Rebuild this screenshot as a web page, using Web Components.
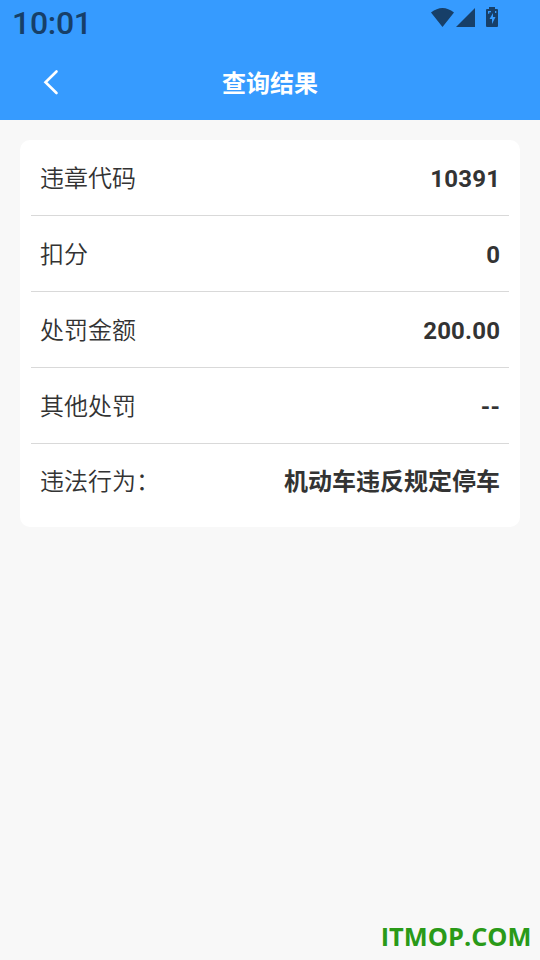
<!DOCTYPE html>
<html lang="zh-CN"><head><meta charset="utf-8"><title>查询结果</title>
<style>html,body{margin:0;height:100%;background:#f8f8f8}body{font-family:Roboto,"Noto Sans CJK SC",sans-serif;color:#333;overflow:hidden}</style></head><body>
<result-page></result-page>
<script>
const define=(name,html)=>customElements.define(name,class extends HTMLElement{
  constructor(){super();this.attachShadow({mode:'open'}).innerHTML=html}
});
define('status-bar',`<style>
:host{display:flex;height:45px;justify-content:space-between;color:#173f68;box-sizing:border-box;padding:0 41px 0 12px}
.time{font:500 32px/46px Roboto,sans-serif;letter-spacing:-.3px}
svg{margin-top:6px;flex:none}
</style><span class="time">10:01</span>
<svg width="69" height="24" viewBox="430 6 69 24"><path fill="currentColor" d="M431 12.500Q442.500 3.500 454 12.500L442.500 27ZM475 8V27H456ZM489 7h6v2h2q1 0 1 1v16q0 1-1 1h-10q-1 0-1-1V10q0-1 1-1h2Z"/><path fill="#369bff" d="M493 13l-3.500 6h2.500v5l3.500-7h-2.500ZM488 11h3v1.300h-1.700v1.500H488ZM495 11h1.300v2h-1.300Z"/></svg>`);
define('nav-bar',`<style>
:host{display:grid;grid-template-columns:80px 1fr 80px;height:75px;align-items:center;color:#fff}
h1{margin:0;padding-bottom:2px;text-align:center;font:700 24px/34px "Noto Sans CJK SC",sans-serif}
svg{margin:-1px 0 0 42px;display:block}
</style><svg width="18" height="28" viewBox="0 0 18 28"><path d="M14.500 3.500L3.500 14.200L14.500 25" fill="none" stroke="#fff" stroke-width="2.600" stroke-linecap="round"/></svg><h1><slot></slot></h1>`);
define('result-row',`<style>
:host{display:flex;align-items:center;justify-content:space-between;height:75px;margin:0 11px;padding:0 9px;border-bottom:1px solid #d9d9d9;font-size:24px;line-height:36px}
:host([last]){border:0;height:71px;padding-bottom:4px}
span{font-weight:350;font-family:"Noto Sans CJK SC DemiLight","Noto Sans CJK SC",sans-serif;padding-bottom:2px}
:host([last]) span{padding:0}
strong{font-weight:660;font-family:Roboto,sans-serif;letter-spacing:.2px;margin-right:-.2px;padding-top:2px}
:host([last]) strong{font-family:"Noto Sans CJK SC",sans-serif;font-weight:700;letter-spacing:0;margin:0;padding:0}
</style><span><slot name="label"></slot></span><strong><slot></slot></strong>`);
define('result-card',`<style>:host{display:block;box-sizing:border-box;margin:20px 20px 0;height:387px;background:#fff;border-radius:10px}</style><slot></slot>`);
define('site-mark',`<style>:host{position:absolute;right:8.5px;bottom:6px;color:#2a9a18;font:700 25.4px/36px "Open Sans",sans-serif}</style><slot></slot>`);
define('result-page',`<style>:host{display:block;position:relative;height:100vh;background:#f8f8f8}header{background:#369bff;height:120px}</style>
<header><status-bar></status-bar><nav-bar>查询结果</nav-bar></header>
<result-card>
<result-row><span slot="label">违章代码</span>10391</result-row>
<result-row><span slot="label">扣分</span>0</result-row>
<result-row><span slot="label">处罚金额</span>200.00</result-row>
<result-row><span slot="label">其他处罚</span>--</result-row>
<result-row last><span slot="label">违法行为：</span>机动车违反规定停车</result-row>
</result-card><site-mark>ITMOP.COM</site-mark>`);
</script></body></html>
